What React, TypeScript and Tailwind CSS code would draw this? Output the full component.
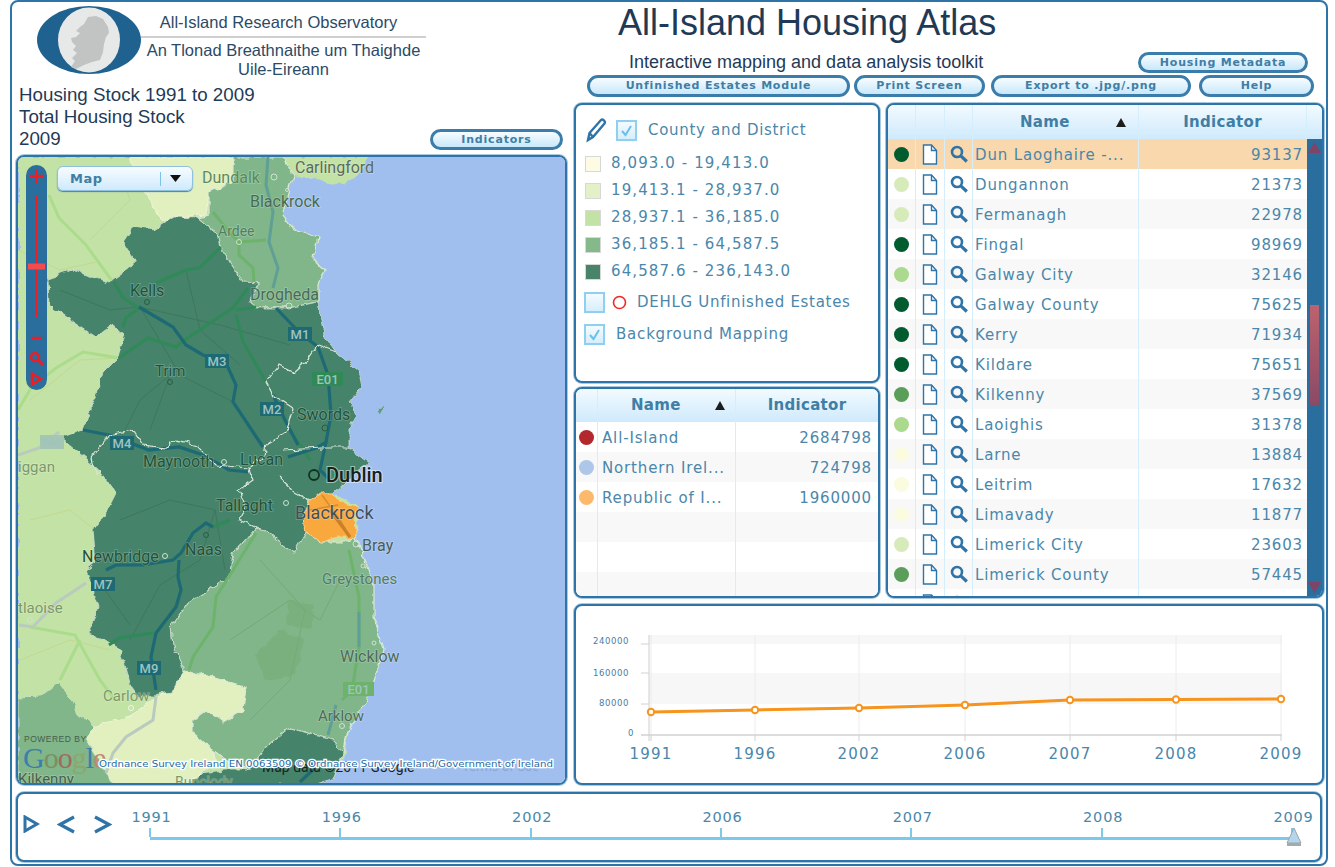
import React from "react";

const DARK = "#005c2f";
const PALE = "#d6eaba";
const LIGHT = "#abd98d";
const MID = "#5b9e5a";
const CREAM = "#fbfbdf";

const counties: [string, string, string][] = [
  ["Dun Laoghaire -...", "93137", DARK],
  ["Dungannon", "21373", PALE],
  ["Fermanagh", "22978", PALE],
  ["Fingal", "98969", DARK],
  ["Galway City", "32146", LIGHT],
  ["Galway County", "75625", DARK],
  ["Kerry", "71934", DARK],
  ["Kildare", "75651", DARK],
  ["Kilkenny", "37569", MID],
  ["Laoighis", "31378", LIGHT],
  ["Larne", "13884", CREAM],
  ["Leitrim", "17632", CREAM],
  ["Limavady", "11877", CREAM],
  ["Limerick City", "23603", PALE],
  ["Limerick County", "57445", MID],
  ["", "", MID],
];

const regions: [string, string, string][] = [
  ["All-Island", "2684798", "#b3282d"],
  ["Northern Irel...", "724798", "#aec6e8"],
  ["Republic of I...", "1960000", "#fdb96b"],
  ["", "", ""],
  ["", "", ""],
  ["", "", ""],
];

const legend: [string, string][] = [
  ["#fdfbe4", "8,093.0 - 19,413.0"],
  ["#e3f0c8", "19,413.1 - 28,937.0"],
  ["#c3e2a6", "28,937.1 - 36,185.0"],
  ["#85b88a", "36,185.1 - 64,587.5"],
  ["#4a8468", "64,587.6 - 236,143.0"],
];

const years = ["1991", "1996", "2002", "2006", "2007", "2008", "2009"];

function TopButton({ label, className }: { label: string; className: string }) {
  return (
    <button className={`flex items-center justify-center rounded-full border-[3px] border-[#3a7dab] bg-gradient-to-b from-[#f7fcff] to-[#c8e8fb] font-['DejaVu_Sans',sans-serif] text-[11px] font-bold tracking-[0.8px] text-[#3f7ea5] ${className}`}>
      {label}
    </button>
  );
}

function Check({ checked }: { checked?: boolean }) {
  return (
    <span className="flex h-[21px] w-[21px] shrink-0 items-center justify-center border-2 border-[#8fcff0] bg-gradient-to-b from-[#f4fbff] to-[#d6eefc]">
      {checked && (
        <svg width="13" height="13" viewBox="0 0 13 13" fill="none" stroke="#6cbfe8" strokeWidth="2">
          <path d="M2 7l3.5 4L11 2" />
        </svg>
      )}
    </span>
  );
}

function DocIcon() {
  return (
    <svg width="16" height="21" viewBox="0 0 16 21" fill="#fff" stroke="#2e74a8" strokeWidth="1.4">
      <path d="M1.5 1h8l5 5.5V20h-13z" />
      <path d="M9.5 1v5.5h5" fill="none" />
    </svg>
  );
}

function SearchIcon() {
  return (
    <svg width="18" height="18" viewBox="0 0 18 18" fill="none" stroke="#2e74a8">
      <circle cx="7" cy="7" r="5" strokeWidth="2.6" />
      <path d="M10.8 10.8L16.8 16.5" strokeWidth="3.2" />
    </svg>
  );
}

function SortArrow() {
  return (
    <svg width="10" height="9" viewBox="0 0 10 9" fill="#1d1d1d">
      <path d="M5 0l5 9H0z" />
    </svg>
  );
}

function Logo() {
  return (
    <svg width="104" height="68" viewBox="37 6 104 68" className="shrink-0">
      <ellipse cx="89" cy="40" rx="52" ry="34" fill="#1f628f" />
      <ellipse cx="89" cy="40" rx="31" ry="32.5" fill="#e7e8e8" />
      <path
        d="M88 17L96 16L103 19L108 27L109 33L106 37L104 44L103 52L100 60L92 62L84 65L76 69L71 67L75 61L72 58L77 53L73 50L76 46L72 42L71 38L76 37L80 33L76 31L80 27L84 24Z"
        fill="#c2c3c3"
      />
    </svg>
  );
}

function MapCanvas() {
  const land =
    "18,157 369,157 356,178 336,185 309,178 293,175 286,198 283,215 293,228 318,238 313,258 324,270 318,288 318,305 324,335 336,352 359,372 363,385 349,402 356,415 349,428 349,448 369,462 356,472 333,493 359,507 356,537 363,557 374,587 374,617 384,650 373,683 366,703 349,727 346,753 333,780 316,785 18,785";
  const pale1 = "129,157 233,157 234,182 209,192 206,215 173,217 169,225 156,212 146,192";
  const louth =
    "233,157 283,157 293,175 286,198 283,215 293,228 318,238 313,258 324,270 318,288 318,302 289,308 256,308 249,302 259,283 243,282 223,252 218,235 198,218 209,215 209,192 233,182";
  const meath =
    "173,217 198,218 218,235 223,252 243,282 259,283 249,302 256,308 289,308 318,302 324,335 336,352 359,372 363,385 349,402 356,415 349,428 349,448 369,462 356,472 333,493 323,493 309,500 304,518 306,532 294,552 283,545 266,530 256,528 233,553 229,577 188,603 171,627 173,647 184,670 171,692 139,697 129,683 119,647 89,633 99,607 86,570 96,562 93,530 106,513 116,493 99,470 61,438 83,430 104,372 118,358 124,335 113,325 96,337 49,305 48,278 71,270 109,282 136,263 123,242 133,227 153,230";
  const wicklow =
    "256,528 266,530 283,545 294,552 306,532 323,542 349,542 356,537 363,557 374,587 374,617 384,650 373,683 366,703 349,727 343,753 333,740 289,728 266,747 249,770 226,760 213,750 193,733 193,720 206,710 223,722 243,710 246,687 216,678 184,670 173,647 171,627 188,603 229,577 233,553";
  const carlow =
    "184,670 216,678 246,687 243,710 223,722 206,710 193,720 193,733 213,750 216,763 203,773 183,785 113,785 99,760 84,737 94,727 129,717 156,697 171,692";
  const kilkenny =
    "18,698 39,697 58,683 73,702 78,713 94,727 84,737 99,760 113,785 18,785";
  const wexford = "289,728 333,740 343,753 333,780 316,785 190,785 203,773 223,770 249,770 266,747";
  const dlr = "309,500 323,493 333,493 339,502 359,507 354,520 356,538 339,538 323,542 306,532 304,518";

  const labels: [string, number, number, number, string][] = [
    ["Carlingford", 295, 173, 16, "#5a6a5c"],
    ["Dundalk", 202, 183, 16, "#5d8a5a"],
    ["Blackrock", 250, 207, 16, "#4a6a50"],
    ["Ardee", 218, 236, 14, "#4f7f5c"],
    ["Kells", 130, 296, 16, "#1f5238"],
    ["Drogheda", 250, 300, 16, "#476a58"],
    ["Trim", 155, 376, 15, "#1f5238"],
    ["Swords", 297, 420, 16, "#1f5238"],
    ["Maynooth", 143, 467, 16, "#1f5238"],
    ["Lucan", 240, 465, 16, "#1f5238"],
    ["Tallaght", 216, 511, 16, "#1f5238"],
    ["Blackrock", 295, 519, 18, "#40505a"],
    ["Bray", 362, 551, 16, "#4c5c58"],
    ["Naas", 185, 555, 16, "#1f5238"],
    ["Newbridge", 82, 562, 16, "#1f5238"],
    ["Greystones", 322, 584, 15, "#557a64"],
    ["Wicklow", 340, 662, 16, "#4f6a58"],
    ["Carlow", 103, 701, 15, "#7a9a6a"],
    ["Arklow", 318, 721, 15, "#4f6a58"],
    ["tlaoise", 18, 613, 15, "#7a9a6a"],
    ["iggan", 18, 472, 15, "#7a9a6a"],
    ["Kilkenny", 18, 784, 15, "#47604a"],
    ["Bunclody", 175, 787, 14, "#7a9a6a"],
  ];

  const shields: [string, number, number, string][] = [
    ["M3", 205, 354, "#1d6a74"],
    ["M1", 288, 327, "#1d6a74"],
    ["M2", 260, 402, "#1d6a74"],
    ["M4", 110, 436, "#1d6a74"],
    ["E01", 312, 372, "#2f8a58"],
    ["M6", 40, 435, "#a6c6b4"],
    ["M7", 91, 577, "#1d6a74"],
    ["M9", 137, 661, "#1d6a74"],
    ["E01", 343, 682, "#6db36c"],
  ];

  return (
    <svg viewBox="18 157 547 626" width="547" height="626" className="block">
      <defs>
        <filter id="rough" x="-5%" y="-5%" width="110%" height="110%">
          <feTurbulence type="fractalNoise" baseFrequency="0.12" numOctaves="2" seed="4" />
          <feDisplacementMap in="SourceGraphic" scale="7" xChannelSelector="R" yChannelSelector="G" />
        </filter>
      </defs>
      <rect x="18" y="157" width="547" height="626" fill="#a0bfee" />
      <g filter="url(#rough)">
        <polygon points={land} fill="#c3e2a6" />
        <polygon points="378,408 384,407 381,413 376,412" fill="#5f9f6a" />
      </g>
      <g fill="none" stroke="#c3d88f" strokeWidth="1">
        <path d="M18,250 L60,270 L96,262 M120,170 L130,200 L90,240 M30,400 L80,360 L118,358 M30,520 L70,510 L95,530 M20,660 L70,640 L110,650" />
      </g>
      <g fill="none" stroke="#abdc8c" strokeWidth="3">
        <path d="M49,195 L59,218 L86,245 L113,282" />
        <path d="M119,358 L83,352 L56,368 L31,388" />
        <path d="M31,388 L18,410" />
        <path d="M30,627 L75,635 L100,680 L115,700 M80,640 L60,680" />
      </g>
      <g filter="url(#rough)">
        <polygon points={pale1} fill="#e2f0c0" stroke="#eef5dc" strokeWidth="1" />
        <polygon points={carlow} fill="#e2f0c0" stroke="#eef5dc" strokeWidth="1" />
        <polygon points={kilkenny} fill="#80b689" stroke="#c5dcc0" strokeWidth="1" />
        <polygon points={louth} fill="#80b689" stroke="#dbe8d2" strokeWidth="1.2" />
        <polygon points={wicklow} fill="#80b689" stroke="#dbe8d2" strokeWidth="1.2" />
        <polygon points={meath} fill="#45836a" stroke="#cfdccf" strokeWidth="0.8" />
        <polygon points={wexford} fill="#45836a" stroke="#cfdccf" strokeWidth="0.8" />
      </g>
      <g fill="none" stroke="#3e7458" strokeWidth="1" opacity="0.8">
        <path d="M140,307 L180,375 L233,402 M60,290 L110,310 L139,307 L220,325 L290,345 M170,375 L140,400 L120,440 M186,270 L200,330 L240,365 M170,375 L150,430" />
        <path d="M120,520 L170,500 L215,510 L200,560 L160,585 L130,640 M105,590 L130,625 M215,510 L225,570" />
      </g>
      <g fill="none" stroke="#75a36e" strokeWidth="1" opacity="0.7">
        <path d="M230,640 L290,600 L320,620 L340,580 M260,560 L305,610 L290,680 L250,720" />
      </g>
      <path d="M255,655 l25,-25 l25,10 l-10,35 l-30,5z M290,600 l25,5 l-5,25 l-25,-5z" fill="#75ad78" opacity="0.6" filter="url(#rough)" />
      <g fill="none" stroke="#2f8a58" strokeWidth="3">
        <path d="M221,247 L199,268 L186,270 L156,283" />
        <path d="M114,282 L123,298 L139,308 L126,318 L123,327" />
        <path d="M119,358 L148,338 L176,347 L189,337 L233,308 L248,288" />
        <path d="M236,310 L256,307" />
        <path d="M236,315 L243,342 L266,382" />
        <path d="M109,645 L119,638 L153,633" />
        <path d="M290,430 L310,460" />
        <path d="M230,520 L213,527" />
      </g>
      <g fill="none" stroke="#6db36c" strokeWidth="3">
        <path d="M213,212 L229,232 L239,242 L266,240" />
        <path d="M239,242 L239,255 L253,268 L254,282" />
        <path d="M256,533 L233,570 L216,597 L213,627 L193,657 L189,670" />
        <path d="M349,550 L359,597 L359,647 L352,690 L342,700" />
      </g>
      <g fill="none" stroke="#5f9f96" strokeWidth="3">
        <path d="M268,157 L266,185 L273,212 L269,242 L278,268 L273,288" />
        <path d="M359,612 L359,647" />
        <path d="M336,705 L328,735" />
      </g>
      <g fill="none" stroke="#b9cabf" strokeWidth="3">
        <path d="M156,697 L153,720 L126,737 L113,753 L106,773" />
        <path d="M18,455 L39,448 L59,432" />
        <path d="M19,625 L33,627 L56,603 L86,583" />
      </g>
      <g fill="none" stroke="#1d6a74" strokeWidth="3.2">
        <path d="M139,307 L173,327 L186,345 L203,355 L226,363 L236,385 L233,402 L263,447" />
        <path d="M276,308 L299,332 L318,347 L328,375 L331,415 L326,442 L316,448 L288,457" />
        <path d="M273,395 L286,422 L298,445" />
        <path d="M83,430 L109,435 L149,450 L179,447 L203,455 L229,470 L249,472" />
        <path d="M106,570 L116,565 L143,565 L173,560 L181,553 L193,533 L206,523 L213,527" />
        <path d="M179,560 L178,577 L181,590 L176,607 L156,633 L151,657 L156,690" />
        <path d="M326,442 L320,470 L330,480" />
        <path d="M318,765 L300,782" />
      </g>
      <g fill="none" stroke="#dbe5da" strokeWidth="1.2" filter="url(#rough)">
        <path d="M318,345 L309,358 L293,372 L279,365 L266,382 L273,395 L293,408 L286,432 L266,445 L264,455 L249,470 L253,480 L239,490 L246,507 L239,520 L256,528" />
        <path d="M91,458 L109,435 L133,430 L143,445 L166,448 L176,440 L196,445 L216,465 L249,468" />
        <path d="M279,477 L296,493 L309,500" />
        <path d="M283,450 L323,448 L349,448" />
        <path d="M318,345 L336,352" />
        <path d="M91,458 L96,475 L99,470" />
      </g>
      <polygon points={dlr} fill="#f9a83d" stroke="#fbd28a" strokeWidth="0.8" filter="url(#rough)" />
      <path d="M322,495 L340,520 L350,537 M310,510 L338,505" fill="none" stroke="#d98a2c" strokeWidth="1.5" />
      <path d="M330,510 L350,537" fill="none" stroke="#c97f2b" strokeWidth="3" />

      {shields.map(([t, x, y, c]) => (
        <g key={`${t}${x}`}>
          <rect x={x} y={y} width={t.length > 2 ? 31 : 24} height="14" fill={c} />
          <text x={x + (t.length > 2 ? 15.5 : 12)} y={y + 12} textAnchor="middle" fontFamily="Roboto, sans-serif" fontSize="13" fontWeight="500" fill="#9fc4bc">
            {t}
          </text>
        </g>
      ))}
      <g fill="none" stroke="#cfe2d0" strokeWidth="1">
        <circle cx="274" cy="177" r="3" />
        <circle cx="287" cy="190" r="1.5" />
        <circle cx="239" cy="242" r="2.5" />
        <circle cx="147" cy="302" r="2.5" stroke="#2b5c44" />
        <circle cx="289" cy="306" r="3" />
        <circle cx="170" cy="382" r="2.5" stroke="#2b5c44" />
        <circle cx="325" cy="428" r="3" stroke="#2b5c44" />
        <circle cx="224" cy="462" r="2.5" />
        <circle cx="286" cy="503" r="2.5" />
        <circle cx="206" cy="535" r="2.5" stroke="#2b5c44" />
        <circle cx="165" cy="556" r="2.5" />
        <circle cx="356" cy="544" r="3" />
        <circle cx="363" cy="566" r="2" />
        <circle cx="374" cy="643" r="2" />
        <circle cx="131" cy="708" r="2.5" stroke="#f3f7ea" />
        <circle cx="342" cy="726" r="2.5" />
        <circle cx="30" cy="620" r="2.5" />
      </g>
      <circle cx="314" cy="475" r="5" fill="none" stroke="#10331f" strokeWidth="1.8" />

      {labels.map(([t, x, y, s, c]) => (
        <text key={`${t}${x}`} x={x} y={y} fontFamily="Roboto, sans-serif" fontSize={s} fill={c} stroke="#ffffff" strokeOpacity="0.25" strokeWidth="1.5" paintOrder="stroke">
          {t}
        </text>
      ))}
      <text x="326" y="482" fontFamily="Roboto, sans-serif" fontSize="20" fontWeight="500" fill="#16211c" stroke="#ffffff" strokeOpacity="0.5" strokeWidth="2" paintOrder="stroke">
        Dublin
      </text>

      <text x="24" y="742" fontFamily="Liberation Sans, sans-serif" fontSize="8.5" letterSpacing="0.5" fill="#46604a">
        POWERED BY
      </text>
      <text x="23" y="768" fontFamily="Liberation Serif, serif" fontSize="30" letterSpacing="-1">
        <tspan fill="#3d7fa8">G</tspan>
        <tspan fill="#7d8f60">o</tspan>
        <tspan fill="#a06a60">o</tspan>
        <tspan fill="#8aa86a">g</tspan>
        <tspan fill="#3d7fa8">l</tspan>
        <tspan fill="#c08a70">e</tspan>
      </text>

      <text x="262" y="772" fontFamily="Roboto, sans-serif" fontSize="14" fill="#1b241f">
        Map data ©2011 Google
      </text>
      <text x="462" y="771" fontFamily="Roboto, sans-serif" fontSize="13" fill="#8aa5d6">
        Terms of Use
      </text>
      <text x="99" y="767" textLength="454" lengthAdjust="spacingAndGlyphs" fontFamily="DejaVu Sans, sans-serif" fontSize="9" fill="#1f6aa5" stroke="#ffffff" strokeWidth="2.5" paintOrder="stroke">
        Ordnance Survey Ireland EN 0063509 © Ordnance Survey Ireland/Government of Ireland
      </text>
    </svg>
  );
}

function ZoomBar() {
  return (
    <div className="absolute left-[8px] top-[8px] flex h-[225px] w-[21px] flex-col items-center rounded-full bg-[#2a6e9e]">
      <svg width="21" height="225" viewBox="0 0 21 225" fill="none" stroke="#f01c24" strokeWidth="2.5">
        <path d="M4 11h13M10.5 5v13" />
        <path d="M10.5 30v123" strokeWidth="2" />
        <path d="M2 101.5h17" strokeWidth="6" stroke="#f54a4e" />
        <path d="M5 173h11" />
        <circle cx="9" cy="192" r="4" />
        <path d="M12 195l5 5" strokeWidth="3" />
        <path d="M6 208.5l9 5.5-9 5.5z" />
      </svg>
    </div>
  );
}

function MapSelect() {
  return (
    <div className="absolute left-[39px] top-[9px] flex h-[25px] w-[136px] items-center rounded-md border border-[#8fc0df] bg-gradient-to-b from-[#f7fcff] to-[#cfeafc] shadow-[0_1px_1px_#4d7fa3]">
      <span className="w-[102px] pl-[12px] font-['DejaVu_Sans',sans-serif] text-[13px] font-bold tracking-[0.5px] text-[#3f7ea5]">Map</span>
      <span className="h-[14px] w-[1px] bg-[#7cc2ea]" />
      <svg className="ml-[9px]" width="11" height="7" viewBox="0 0 11 7" fill="#111">
        <path d="M0 0h11L5.5 7z" />
      </svg>
    </div>
  );
}

function Chart() {
  const xs = [651, 755, 859, 965, 1070, 1176, 1281];
  const ys = [712, 710, 708, 705, 700, 699.5, 699];
  const pts = xs.map((x, i) => `${x},${ys[i]}`).join(" ");
  return (
    <svg viewBox="576 606 746 177" width="746" height="177" className="block">
      <rect x="649" y="635" width="633" height="9" fill="#f7f7f7" />
      <rect x="649" y="673" width="633" height="31" fill="#f7f7f7" />
      {xs.map((x) => (
        <path key={x} d={`M${x} 635V735`} stroke="#ececec" />
      ))}
      <path d="M649 635V741" stroke="#cfcfcf" />
      <path d="M641 735H1282" stroke="#d2d2d2" strokeWidth="1.5" />
      <path d="M641 644h8M641 673h8M641 704h8" stroke="#d2d2d2" />
      {xs.map((x) => (
        <path key={x} d={`M${x} 735v6`} stroke="#cfcfcf" />
      ))}
      <g fontFamily="DejaVu Sans, sans-serif" fontSize="8.5" letterSpacing="0.6" fill="#3f7ea5" textAnchor="end">
        <text x="629" y="644">240000</text>
        <text x="629" y="676">160000</text>
        <text x="629" y="706">80000</text>
        <text x="634" y="736">0</text>
      </g>
      <polyline points={pts} fill="none" stroke="#f7941d" strokeWidth="3" />
      {xs.map((x, i) => (
        <circle key={x} cx={x} cy={ys[i]} r="3.2" fill="#fff" stroke="#f7941d" strokeWidth="2" />
      ))}
      <g fontFamily="DejaVu Sans, sans-serif" fontSize="15" letterSpacing="1.2" fill="#4a87aa" textAnchor="middle">
        {years.map((y, i) => (
          <text key={y} x={xs[i]} y="759">{y}</text>
        ))}
      </g>
    </svg>
  );
}

function Timeline() {
  return (
    <div className="mt-[7px] ml-0 flex h-[70px] w-[1306px] rounded-lg border-2 border-[#2e74a8] bg-white shadow-[0_0_0_1px_#a9c9df]">
      <div className="flex w-[132px] shrink-0 items-start pt-[21px] pl-[5px]">
        <svg width="17" height="18" viewBox="0 0 17 18" fill="none" stroke="#2e74a8" strokeWidth="3">
          <path d="M2 2l12 7-12 7z" />
        </svg>
        <svg className="ml-[17px]" width="19" height="19" viewBox="0 0 19 19" fill="none" stroke="#2e74a8" strokeWidth="3.2">
          <path d="M17 2L3 9.5 17 17" />
        </svg>
        <svg className="ml-[17px]" width="19" height="19" viewBox="0 0 19 19" fill="none" stroke="#2e74a8" strokeWidth="3.2">
          <path d="M2 2l14 7.5L2 17" />
        </svg>
      </div>
      <div className="relative mr-[28px] flex-1">
        <div className="flex justify-between pt-[14px]">
          {years.map((y) => (
            <div key={y} className="flex w-0 flex-col items-center">
              <span className="ml-[3px] font-['DejaVu_Sans',sans-serif] text-[14.5px] leading-[18px] tracking-[0.8px] text-[#4a87aa]">{y}</span>
              <span className="mt-[2px] h-[9px] w-[2px] bg-[#7ec8ec]" />
            </div>
          ))}
        </div>
        <div className="h-[3px] bg-[#7ec8ec]" />
        <svg className="absolute right-[-12px] top-[33px]" width="20" height="21" viewBox="0 0 20 21">
          <path d="M10 1l7 15H3z" fill="#b5d6ea" stroke="#9aa5ab" />
          <path d="M3 16h14v3H3z" fill="#a4a9ad" />
        </svg>
      </div>
    </div>
  );
}

export default function App() {
  return (
    <div className="h-[867px] w-[1335px] overflow-hidden bg-white pl-[10px] pr-[7px] font-['DejaVu_Sans',sans-serif]">
      <div className="flex h-[866px] flex-col rounded-lg border-2 border-[#2e74a8] pl-[4px]">
        <div className="flex gap-[7px]">
          {/* left column */}
          <div className="flex w-[551px] flex-col">
            <div className="flex h-[82px] pl-[21px] pt-[4px]">
              <Logo />
              <div className="flex w-[285px] flex-col items-center font-['Liberation_Sans',sans-serif] text-[#2b4a66]">
                <div className="mt-[6px] pr-[10px] text-[16.5px] leading-[20px]">All-Island Research Observatory</div>
                <div className="mt-[4px] h-[2px] w-full bg-[#cfcfcf]" />
                <div className="mt-[3px] text-[16.5px] leading-[19px]">An Tlonad Breathnaithe um Thaighde</div>
                <div className="text-[16.5px] leading-[19px]">Uile-Eireann</div>
              </div>
            </div>
            <div className="flex items-end justify-between pl-[3px] pr-[4px]">
              <div className="font-['Liberation_Sans',sans-serif] text-[18.75px] leading-[22px] text-[#1f3a57]">
                <div>Housing Stock 1991 to 2009</div>
                <div>Total Housing Stock</div>
                <div>2009</div>
              </div>
              <TopButton label="Indicators" className="h-[21px] w-[133px] pt-[1px]" />
            </div>
            <div className="relative mt-[5px] h-[630px] overflow-hidden rounded-lg border-2 border-[#2e74a8] shadow-[0_0_0_1px_#a9c9df]">
              <MapCanvas />
              <ZoomBar />
              <MapSelect />
            </div>
          </div>

          {/* right column */}
          <div className="flex w-[750px] flex-col">
            <div className="h-[44px] pl-[44px] font-['Liberation_Sans',sans-serif] text-[36px] leading-[42px] text-[#1f3a57]">All-Island Housing Atlas</div>
            <div className="mt-[6px] flex h-[21px] items-center justify-between pl-[55px] pr-[16px]">
              <span className="font-['Liberation_Sans',sans-serif] text-[18px] text-[#1f3a57]">Interactive mapping and data analysis toolkit</span>
              <TopButton label="Housing Metadata" className="h-[21px] w-[170px] pt-[1px]" />
            </div>
            <div className="mt-[2px] flex h-[22px] pl-[13px]">
              <TopButton label="Unfinished Estates Module" className="w-[263px]" />
              <TopButton label="Print Screen" className="ml-[4px] w-[131px]" />
              <TopButton label="Export to .jpg/.png" className="ml-[6px] w-[200px]" />
              <TopButton label="Help" className="ml-[8px] w-[115px]" />
            </div>

            <div className="mt-[6px] flex gap-[6px]">
              <div className="flex w-[306px] flex-col gap-[4px]">
                {/* legend */}
                <div className="h-[280px] rounded-lg border-2 border-[#2e74a8] bg-white shadow-[0_0_0_1px_#a9c9df]">
                  <div className="flex items-center pl-[9px] pt-[12px]">
                    <svg width="24" height="26" viewBox="0 0 24 26" fill="none" stroke="#2e74a8" strokeWidth="2.4">
                      <path d="M3 23l1.5-7L16 3c1.5-1.5 5 1.5 3.5 3.5L8 20z" />
                      <path d="M4.5 16l3.5 4" />
                    </svg>
                    <span className="ml-[7px]"><Check checked /></span>
                    <span className="ml-[11px] text-[15px] tracking-[0.7px] text-[#4a87aa]">County and District</span>
                  </div>
                  <div className="mt-[7px] flex flex-col pl-[9px]">
                    {legend.map(([c, t]) => (
                      <div key={t} className="flex h-[27px] items-center">
                        <span className="h-[16px] w-[16px] border border-[#d8d8d8]" style={{ background: c }} />
                        <span className="ml-[10px] text-[15px] tracking-[1.1px] text-[#4a87aa]">{t}</span>
                      </div>
                    ))}
                  </div>
                  <div className="mt-[4px] flex h-[27px] items-center pl-[8px]">
                    <Check />
                    <svg className="ml-[7px]" width="15" height="15" viewBox="0 0 15 15" fill="none" stroke="#ef2a24" strokeWidth="1.6">
                      <circle cx="7.5" cy="7.5" r="6" />
                    </svg>
                    <span className="ml-[10px] text-[15px] tracking-[0.7px] text-[#4a87aa]">DEHLG Unfinished Estates</span>
                  </div>
                  <div className="mt-[5px] flex h-[27px] items-center pl-[8px]">
                    <Check checked />
                    <span className="ml-[11px] text-[15px] tracking-[0.8px] text-[#4a87aa]">Background Mapping</span>
                  </div>
                </div>

                {/* regions table */}
                <div className="h-[211px] overflow-hidden rounded-lg border-2 border-[#2e74a8] bg-white shadow-[0_0_0_1px_#a9c9df]">
                  <div className="grid h-[33px] grid-cols-[22px_138px_1fr] bg-gradient-to-b from-[#f2faff] to-[#cfeafc] text-[15px] font-bold tracking-[0.3px] text-[#3f7ea5]">
                    <div className="border-r border-[#d5eefc]" />
                    <div className="flex items-center justify-between border-r border-[#d5eefc] pl-[33px] pr-[10px]">
                      <span>Name</span>
                      <SortArrow />
                    </div>
                    <div className="flex items-center justify-center">Indicator</div>
                  </div>
                  {regions.map(([name, val, c], i) => (
                    <div key={i} className={`grid h-[30px] grid-cols-[22px_138px_1fr] text-[15px] tracking-[0.85px] text-[#4a87aa] ${i % 2 ? "bg-[#f8f8f8]" : "bg-white"}`}>
                      <div className="flex items-center justify-center border-r border-[#d5eefc]">
                        {c && <span className="h-[15px] w-[15px] rounded-full" style={{ background: c }} />}
                      </div>
                      <div className="flex items-center overflow-hidden whitespace-nowrap border-r border-[#d5eefc] pl-[4px] pt-[3px]">{name}</div>
                      <div className="flex items-center justify-end pr-[6px] pt-[3px]">{val}</div>
                    </div>
                  ))}
                </div>
              </div>

              {/* counties table */}
              <div className="h-[495px] w-[438px] overflow-hidden rounded-lg border-2 border-[#2e74a8] bg-white shadow-[0_0_0_1px_#a9c9df]">
                <div className="grid h-[34px] grid-cols-[28px_29px_28px_166px_168px_15px] bg-gradient-to-b from-[#f2faff] to-[#cfeafc] text-[15px] font-bold tracking-[0.3px] text-[#3f7ea5]">
                  <div className="border-r border-[#d5eefc]" />
                  <div className="border-r border-[#d5eefc]" />
                  <div className="border-r border-[#d5eefc]" />
                  <div className="flex items-center justify-between border-r border-[#d5eefc] pl-[47px] pr-[12px]">
                    <span>Name</span>
                    <SortArrow />
                  </div>
                  <div className="flex items-center justify-center border-r border-[#d5eefc]">Indicator</div>
                  <div />
                </div>
                <div className="flex h-[457px]">
                  <div className="w-[419px] overflow-hidden">
                    {counties.map(([name, val, c], i) => (
                      <div
                        key={i}
                        className={`grid h-[30px] grid-cols-[28px_29px_28px_166px_168px] text-[15px] tracking-[0.85px] text-[#4a87aa] ${i === 0 ? "bg-[#f8d8ac]" : i % 2 ? "bg-white" : "bg-[#f8f8f8]"}`}
                      >
                        <div className="flex items-center justify-center border-r border-[#d5eefc]">
                          <span className="h-[15px] w-[15px] rounded-full" style={{ background: c }} />
                        </div>
                        <div className="flex items-center justify-center border-r border-[#d5eefc]">
                          <DocIcon />
                        </div>
                        <div className="flex items-center justify-center border-r border-[#d5eefc]">
                          <SearchIcon />
                        </div>
                        <div className="flex items-center overflow-hidden whitespace-nowrap border-r border-[#d5eefc] pl-[2px] pt-[3px]">{name}</div>
                        <div className="flex items-center justify-end pr-[4px] pt-[3px]">{val}</div>
                      </div>
                    ))}
                  </div>
                  <div className="flex w-[15px] flex-col items-center bg-[#2a6e9e] pt-[3px] pb-[3px]">
                    <svg width="13" height="11" viewBox="0 0 13 11" fill="#7f4468">
                      <path d="M6.5 0L13 11H0z" />
                    </svg>
                    <div className="mt-[152px] h-[100px] w-[9px] bg-gradient-to-b from-[#bd626e] to-[#8a4a66]" />
                    <div className="flex-1" />
                    <svg width="13" height="11" viewBox="0 0 13 11" fill="#7f4468">
                      <path d="M0 0h13L6.5 11z" />
                    </svg>
                  </div>
                </div>
              </div>
            </div>

            <div className="mt-[6px] h-[181px] overflow-hidden rounded-lg border-2 border-[#2e74a8] bg-white shadow-[0_0_0_1px_#a9c9df]">
              <Chart />
            </div>
          </div>
        </div>
        <Timeline />
      </div>
    </div>
  );
}
